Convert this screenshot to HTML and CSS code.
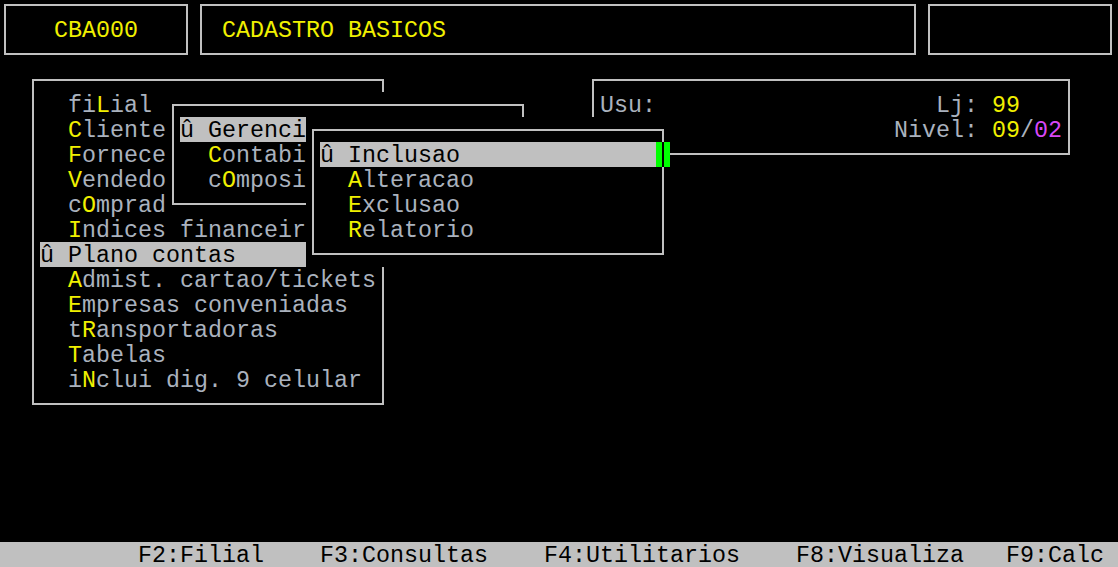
FILE: index.html
```html
<!DOCTYPE html>
<html>
<head lang="pt">
    <meta charset="UTF-8">
    <title>CBA000 - Cadastro Basicos</title>
    <link rel="stylesheet" href="styles.css">
</head>
<body>
<div class="screen">
    <div class="header">
        <div class="win box-prog">
            <div class="line">   <span class="y">CBA000</span></div>
        </div>
        <div class="win box-title">
            <div class="line"> <span class="y">CADASTRO BASICOS</span></div>
        </div>
        <div class="win box-extra"></div>
    </div>

    <div class="desk">
        <!-- menu principal (o resto das linhas fica sob os submenus) -->
        <div class="win menu-main">
            <div class="line">  fi<span class="k">L</span>ial</div>
            <div class="line">  <span class="k">C</span>liente</div>
            <div class="line">  <span class="k">F</span>ornece</div>
            <div class="line">  <span class="k">V</span>endedo</div>
            <div class="line">  c<span class="k">O</span>mprad</div>
            <div class="line">  <span class="k">I</span>ndices financeir</div>
            <div class="line sel">&ucirc; Plano contas</div>
            <div class="line">  <span class="k">A</span>dmist. cartao/tickets</div>
            <div class="line">  <span class="k">E</span>mpresas conveniadas</div>
            <div class="line">  t<span class="k">R</span>ansportadoras</div>
            <div class="line">  <span class="k">T</span>abelas</div>
            <div class="line">  i<span class="k">N</span>clui dig. 9 celular</div>
        </div>

        <!-- usuario / loja -->
        <div class="win box-user">
            <div class="line">Usu:                    Lj: <span class="y">99</span></div>
            <div class="line">                     Nivel: <span class="y">09</span>/<span class="m">02</span></div>
        </div>

        <!-- submenu plano contas -->
        <div class="win menu-plano">
            <div class="line sel">&ucirc; Gerenci</div>
            <div class="line">  <span class="k">C</span>ontabi</div>
            <div class="line">  c<span class="k">O</span>mposi</div>
        </div>

        <!-- submenu gerencial -->
        <div class="win menu-ger">
            <div class="line sel">&ucirc; Inclusao</div>
            <div class="line">  <span class="k">A</span>lteracao</div>
            <div class="line">  <span class="k">E</span>xclusao</div>
            <div class="line">  <span class="k">R</span>elatorio</div>
        </div>

        <div class="cursor"></div>
    </div>

    <div class="footer">          F2:Filial    F3:Consultas    F4:Utilitarios    F8:Visualiza   F9:Calc</div>
</div>
</body>
</html>
```

FILE: styles.css
```css
* {
    margin: 0;
    padding: 0;
}

body {
    background-color: #000;
    overflow: hidden;
}

/* tela de 80 colunas: celula de 14px x 25px */
.screen {
    width: 1120px;
    height: 575px;
    margin: -8px 0 0 -2px;
    font-family: "Liberation Mono", "Courier New", monospace;
    font-size: 23.33px;
    line-height: 25px;
    color: #aab2be;
}

.line {
    height: 25px;
    box-sizing: border-box;
    padding-top: 4px;
    line-height: 21px;
    white-space: pre;
}

.y,
.k {
    color: #f0f000;
}

.m {
    color: #d848f8;
}

.sel {
    background-color: #c0c0c0;
    color: #000;
}

/* janela: fundo limpo e moldura no meio das celulas da borda */
.win {
    position: relative;
    background-color: #000;
    padding: 25px 14px;
    box-sizing: border-box;
}

.win::before {
    content: '';
    position: absolute;
    top: 12px;
    right: 6px;
    bottom: 12px;
    left: 6px;
    border: 2px solid #c0c0c0;
}

.header {
    display: flex;
    height: 75px;
}

.box-prog {
    width: 196px;
}

.box-title {
    width: 728px;
}

.box-extra {
    width: 196px;
}

.desk {
    position: relative;
    height: 475px;
}

.desk .win {
    position: absolute;
}

.menu-main {
    left: 28px;
    top: 0;
    width: 364px;
    height: 350px;
}

.box-user {
    left: 588px;
    top: 0;
    width: 490px;
    height: 100px;
}

.menu-plano {
    left: 168px;
    top: 25px;
    width: 364px;
    height: 125px;
}

.menu-ger {
    left: 308px;
    top: 50px;
    width: 364px;
    height: 150px;
}

.cursor {
    position: absolute;
    left: 658px;
    top: 75px;
    width: 14px;
    height: 25px;
    background: linear-gradient(to right, #00ff00 6px, #000 6px, #000 8px, #00ff00 8px);
}

.footer {
    height: 25px;
    box-sizing: border-box;
    padding-top: 4px;
    line-height: 21px;
    background-color: #c0c0c0;
    color: #000;
    white-space: pre;
}
```
